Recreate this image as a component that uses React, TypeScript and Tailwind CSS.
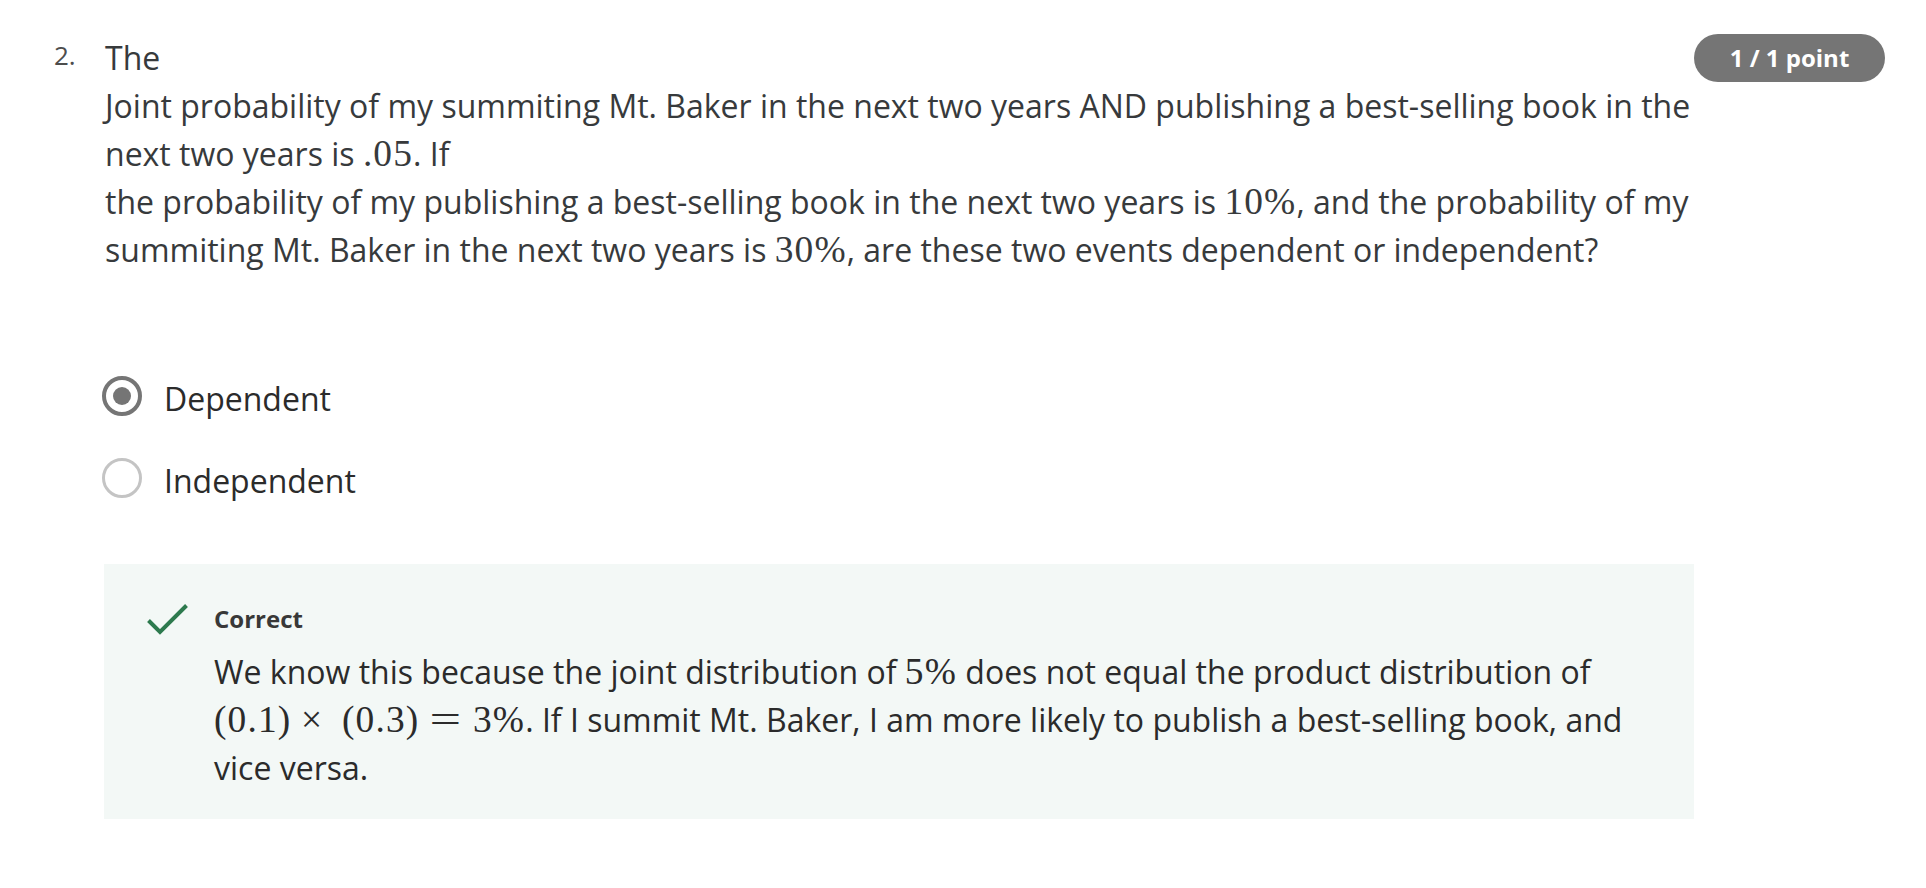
import React from "react";

function M({ children }: { children: React.ReactNode }) {
  return (
    <span className="font-['Liberation_Serif',serif] text-[1.17em] leading-none whitespace-nowrap tracking-[0.03em]">
      {children}
    </span>
  );
}

function Radio({ checked, label }: { checked: boolean; label: string }) {
  return (
    <div className="flex h-[48px] items-center ml-[-3px]">
      <span
        className={
          checked
            ? "flex h-[40px] w-[40px] shrink-0 items-center justify-center rounded-full border-[4px] border-[#757575]"
            : "flex h-[40px] w-[40px] shrink-0 items-center justify-center rounded-full border-[3.5px] border-[#c4c4c4]"
        }
      >
        {checked && <span className="block h-[18px] w-[18px] rounded-full bg-[#757575]" />}
      </span>
      <span className="ml-[22px] mt-[5px] text-[32px] leading-[48px] text-[#2b2b2b]">{label}</span>
    </div>
  );
}

export default function App() {
  return (
    <div className="w-[1926px] h-[888px] bg-white font-['Open_Sans',sans-serif] text-[#373a3c]">
      <div className="flex pt-[34px] pl-[54px] pr-[41px]">
        <div className="w-[51px] shrink-0 mt-[3px] text-[26px] leading-[36px] text-[#4d4d4d]">2.</div>
        <div className="w-[1589px] shrink-0">
          <div className="text-[32px] leading-[48px]">
            <p>The</p>
            <p>
              Joint probability of my summiting Mt. Baker in the next two years AND publishing a best-selling book in the next two years is <M>.05</M>. If
            </p>
            <p>
              the probability of my publishing a best-selling book in the next two years is <M>10%</M>, and the probability of my summiting Mt. Baker in the next two years is <M>30%</M>, are these two events dependent or independent?
            </p>
          </div>

          <div className="mt-[98px]">
            <Radio checked label="Dependent" />
            <div className="mt-[34px]">
              <Radio checked={false} label="Independent" />
            </div>
          </div>

          <div className="mt-[62px] ml-[-1px] flex bg-[#f3f8f6] pt-[37px] pb-[27px] pl-[43px] pr-[43px]">
            <div className="w-[41px] shrink-0 mr-[26px] pt-[3px]">
              <svg width="41" height="31" viewBox="0 0 41 31" fill="none">
                <polyline
                  points="1.5,16.5 13,28 39.5,1.5"
                  stroke="#2d7a4e"
                  strokeWidth="4"
                  fill="none"
                />
              </svg>
            </div>
            <div className="flex-1 text-[#2b2b2b]">
              <div className="text-[24px] font-bold leading-[36px] text-[#383838]">Correct</div>
              <p className="mt-[11px] text-[32px] leading-[48px]">
                We know this because the joint distribution of <M>5%</M> does not equal the product distribution of{" "}
                <M>
                  (0.1)<span className="inline-block ml-[0.26em] mr-[0.5em]">×</span>(0.3)
                  <span className="inline-block mx-[0.42em] scale-x-150">=</span>3%
                </M>
                . If I summit Mt. Baker, I am more likely to publish a best-selling book, and vice versa.
              </p>
            </div>
          </div>
        </div>
        <div className="flex h-[48px] w-[191px] shrink-0 items-center justify-center rounded-full bg-[#757575] text-[24px] font-bold text-white">
          1 / 1 point
        </div>
      </div>
    </div>
  );
}
